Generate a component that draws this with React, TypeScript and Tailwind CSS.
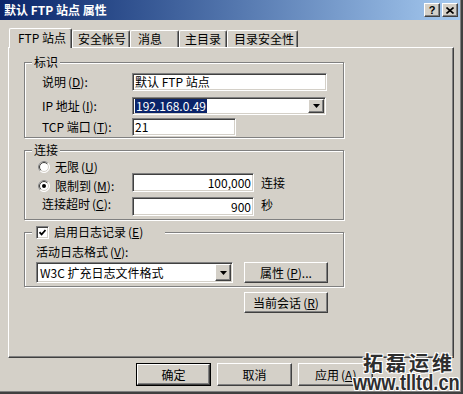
import type { ReactNode } from "react"

const raised =
  "border border-t-white border-l-white border-r-[#404040] border-b-[#404040] shadow-[inset_-1px_-1px_0_#808080]"
const sunken =
  "border border-t-[#808080] border-l-[#808080] border-r-white border-b-white shadow-[inset_1px_1px_0_#404040,inset_-1px_-1px_0_#d4d0c8]"

const Mn = ({ k }: { k: string }) => (
  <span className="ml-[2px]">
    (<span className="underline">{k}</span>)
  </span>
)

const Arrow = () => (
  <svg width="7" height="4" viewBox="0 0 7 4">
    <path d="M0 0h7L3.5 4z" fill="#000" />
  </svg>
)

const Combo = ({ className, children }: { className: string; children: ReactNode }) => (
  <div className={`flex items-stretch bg-white p-[1px] ${sunken} ${className}`}>
    <div className="flex-1 flex items-center pl-[1px]">{children}</div>
    <div className={`w-[16px] flex items-center justify-center bg-[#d4d0c8] ${raised}`}>
      <Arrow />
    </div>
  </div>
)

const Edit = ({ className, children }: { className: string; children?: ReactNode }) => (
  <div className={`flex items-center bg-white px-[2px] ${sunken} ${className}`}>{children}</div>
)

const Btn = ({ className, children, def }: { className: string; children: ReactNode; def?: boolean }) =>
  def ? (
    <div className={`border border-black ${className}`}>
      <div className={`w-full h-full flex items-center justify-center ${raised}`}>{children}</div>
    </div>
  ) : (
    <div className={`flex items-center justify-center ${raised} ${className}`}>{children}</div>
  )

const Radio = ({ on }: { on?: boolean }) => (
  <svg width="12" height="12" viewBox="0 0 12 12" className="shrink-0">
    <circle cx="6" cy="6" r="5.5" fill="#fff" stroke="#fff" />
    <path d="M2.1 9.9A5.5 5.5 0 0 1 9.9 2.1" fill="none" stroke="#808080" />
    <circle cx="6" cy="6" r="4.5" fill="#fff" stroke="#d4d0c8" />
    <path d="M2.8 9.2A4.5 4.5 0 0 1 9.2 2.8" fill="none" stroke="#404040" />
    {on && <circle cx="6" cy="6" r="2" fill="#000" />}
  </svg>
)

const Group = ({ h, legend, children, className = "" }: { h: string; legend: ReactNode; children: ReactNode; className?: string }) => (
  <div className={`relative w-[320px] border border-[#808080] shadow-[1px_1px_0_#fff,inset_1px_1px_0_#fff] ${h} ${className}`}>
    <div className="absolute left-[7px] -top-[8px] bg-[#d4d0c8] px-[2px] leading-[14px]">{legend}</div>
    {children}
  </div>
)

const tabs = [
  { t: "安全帐号", w: "w-[58px]", p: "pl-[5px]" },
  { t: "消息", w: "w-[49px]", p: "pl-[7px]" },
  { t: "主目录", w: "w-[48px]", p: "pl-[5px]" },
  { t: "目录安全性", w: "w-[71px]", p: "pl-[6px]" },
]

export default function App() {
  return (
    <div className="relative w-[463px] h-[394px] overflow-hidden bg-[#d4d0c8] text-[12px] leading-[14px] text-black font-['Noto_Sans_CJK_SC',sans-serif] shadow-[inset_-2px_-2px_0_#404040,inset_-3px_-3px_0_#808080]">
      {/* Title bar */}
      <div className="w-[460px] h-[20px] flex items-center bg-gradient-to-r from-[#0a246a] to-[#a6caf0] pl-[4px] pr-[2px]">
        <span className="flex-1 text-white font-bold text-[12px]">默认 FTP 站点 属性</span>
        <div className={`w-[16px] h-[14px] bg-[#d4d0c8] flex items-center justify-center text-[11px] font-bold font-['Liberation_Sans',sans-serif] ${raised}`}>
          ?
        </div>
        <div className={`ml-[2px] w-[16px] h-[14px] bg-[#d4d0c8] flex items-center justify-center ${raised}`}>
          <svg width="8" height="7" viewBox="0 0 8 7">
            <path d="M0.5 0.5L7.5 6.5M7.5 0.5L0.5 6.5" stroke="#000" strokeWidth="1.6" />
          </svg>
        </div>
      </div>

      {/* Tabs */}
      <div className="mt-[8px] ml-[9px] h-[19px] flex items-end">
        <div className="relative z-10 w-[63px] h-[20px] -mb-[1px] pl-[8px] pb-[2px] flex items-center bg-[#d4d0c8] border-t border-l border-r border-t-white border-l-white border-r-[#404040] shadow-[inset_-1px_0_0_#808080] rounded-t-[2px]">
          FTP 站点
        </div>
        {tabs.map((tab) => (
          <div
            key={tab.t}
            className={`${tab.w} ${tab.p} h-[17px] flex items-center border-t border-l border-r border-t-white border-l-white border-r-[#404040] shadow-[inset_-1px_0_0_#808080] rounded-t-[2px]`}
          >
            {tab.t}
          </div>
        ))}
      </div>

      {/* Panel */}
      <div className="ml-[8px] w-[446px] h-[311px] border border-t-white border-l-white border-r-[#404040] border-b-[#404040] shadow-[inset_-1px_-1px_0_#808080] pl-[15px] pt-[14px]">
        <Group h="h-[76px]" legend="标识">
          <div className="pt-[10px] pl-[17px] flex flex-col">
            <div className="flex items-center h-[18px]">
              <span className="w-[90px]">
                说明<Mn k="D" />:
              </span>
              <Edit className="w-[195px] h-[18px]">默认 FTP 站点</Edit>
            </div>
            <div className="flex items-center h-[18px] mt-[6px]">
              <span className="w-[90px]">
                IP 地址<Mn k="I" />:
              </span>
              <Combo className="w-[194px] h-[18px]">
                <span className="bg-[#0a246a] text-white px-[1px]">192.168.0.49</span>
              </Combo>
            </div>
            <div className="flex items-center h-[18px] mt-[3px]">
              <span className="w-[90px]">
                TCP 端口<Mn k="T" />:
              </span>
              <Edit className="w-[104px] h-[18px]">21</Edit>
            </div>
          </div>
        </Group>

        <Group h="h-[70px]" legend="连接" className="mt-[12px]">
          <div className="flex flex-col">
            <div className="flex items-center h-[12px] mt-[10px] pl-[13px] gap-[5px]">
              <Radio />
              <span>
                无限<Mn k="U" />
              </span>
            </div>
            <div className="flex items-center h-[19px]">
              <div className="w-[107px] pl-[13px] pt-[6px] flex items-center gap-[5px]">
                <Radio on />
                <span>
                  限制到<Mn k="M" />:
                </span>
              </div>
              <Edit className="w-[122px] h-[19px] justify-end">100,000</Edit>
              <span className="ml-[7px]">连接</span>
            </div>
            <div className="flex items-center h-[19px] mt-[5px]">
              <span className="w-[107px] pl-[17px] pb-[6px]">
                连接超时<Mn k="C" />:
              </span>
              <Edit className="w-[122px] h-[19px] justify-end">900</Edit>
              <span className="ml-[7px] pb-[4px]">秒</span>
            </div>
          </div>
        </Group>

        <Group
          h="h-[55px]"
          className="mt-[12px]"
          legend={
            <div className="flex items-center gap-[5px] pl-[2px] pr-[20px]">
              <div className={`w-[13px] h-[13px] bg-white flex items-center justify-center ${sunken}`}>
                <svg width="7" height="7" viewBox="0 0 7 7">
                  <path d="M0.5 3.2L2.6 5.4L6.5 1" fill="none" stroke="#000" strokeWidth="1.7" />
                </svg>
              </div>
              <span>
                启用日志记录<Mn k="E" />
              </span>
            </div>
          }
        >
          <div className="pl-[11px] pt-[12px] flex flex-col">
            <span>
              活动日志格式<Mn k="V" />:
            </span>
            <div className="mt-[3px] flex items-center gap-[11px]">
              <Combo className="w-[197px] h-[21px]">
                <span className="pl-[1px]">W3C 扩充日志文件格式</span>
              </Combo>
              <Btn className="w-[84px] h-[21px]">
                属性<Mn k="P" />...
              </Btn>
            </div>
          </div>
        </Group>

        <Btn className="mt-[5px] ml-[220px] w-[84px] h-[21px]">
          当前会话<Mn k="R" />
        </Btn>
      </div>

      {/* Dialog buttons */}
      <div className="mt-[5px] pl-[136px] flex gap-[6px]">
        <Btn def className="w-[75px] h-[23px]">
          确定
        </Btn>
        <Btn className="w-[75px] h-[23px]">取消</Btn>
        <Btn className="w-[75px] h-[23px] justify-start pl-[16px]">
          应用<Mn k="A" />
        </Btn>
      </div>

      {/* Watermark */}
      <div className="absolute left-[340px] top-[352px] w-[120px] flex flex-col items-end text-[#2e2e2e] font-bold [text-shadow:1px_1px_0_#fff,-1px_-1px_0_#fff,1px_-1px_0_#fff,-1px_1px_0_#fff]">
        <span className="text-[20px] leading-[22px] tracking-[3px] mr-[5px]">拓磊运维</span>
        <span className="text-[22px] leading-[20px] font-['Liberation_Sans',sans-serif] scale-x-[0.83] origin-right -mt-[1px]">
          www.tlltd.cn
        </span>
      </div>
    </div>
  )
}
